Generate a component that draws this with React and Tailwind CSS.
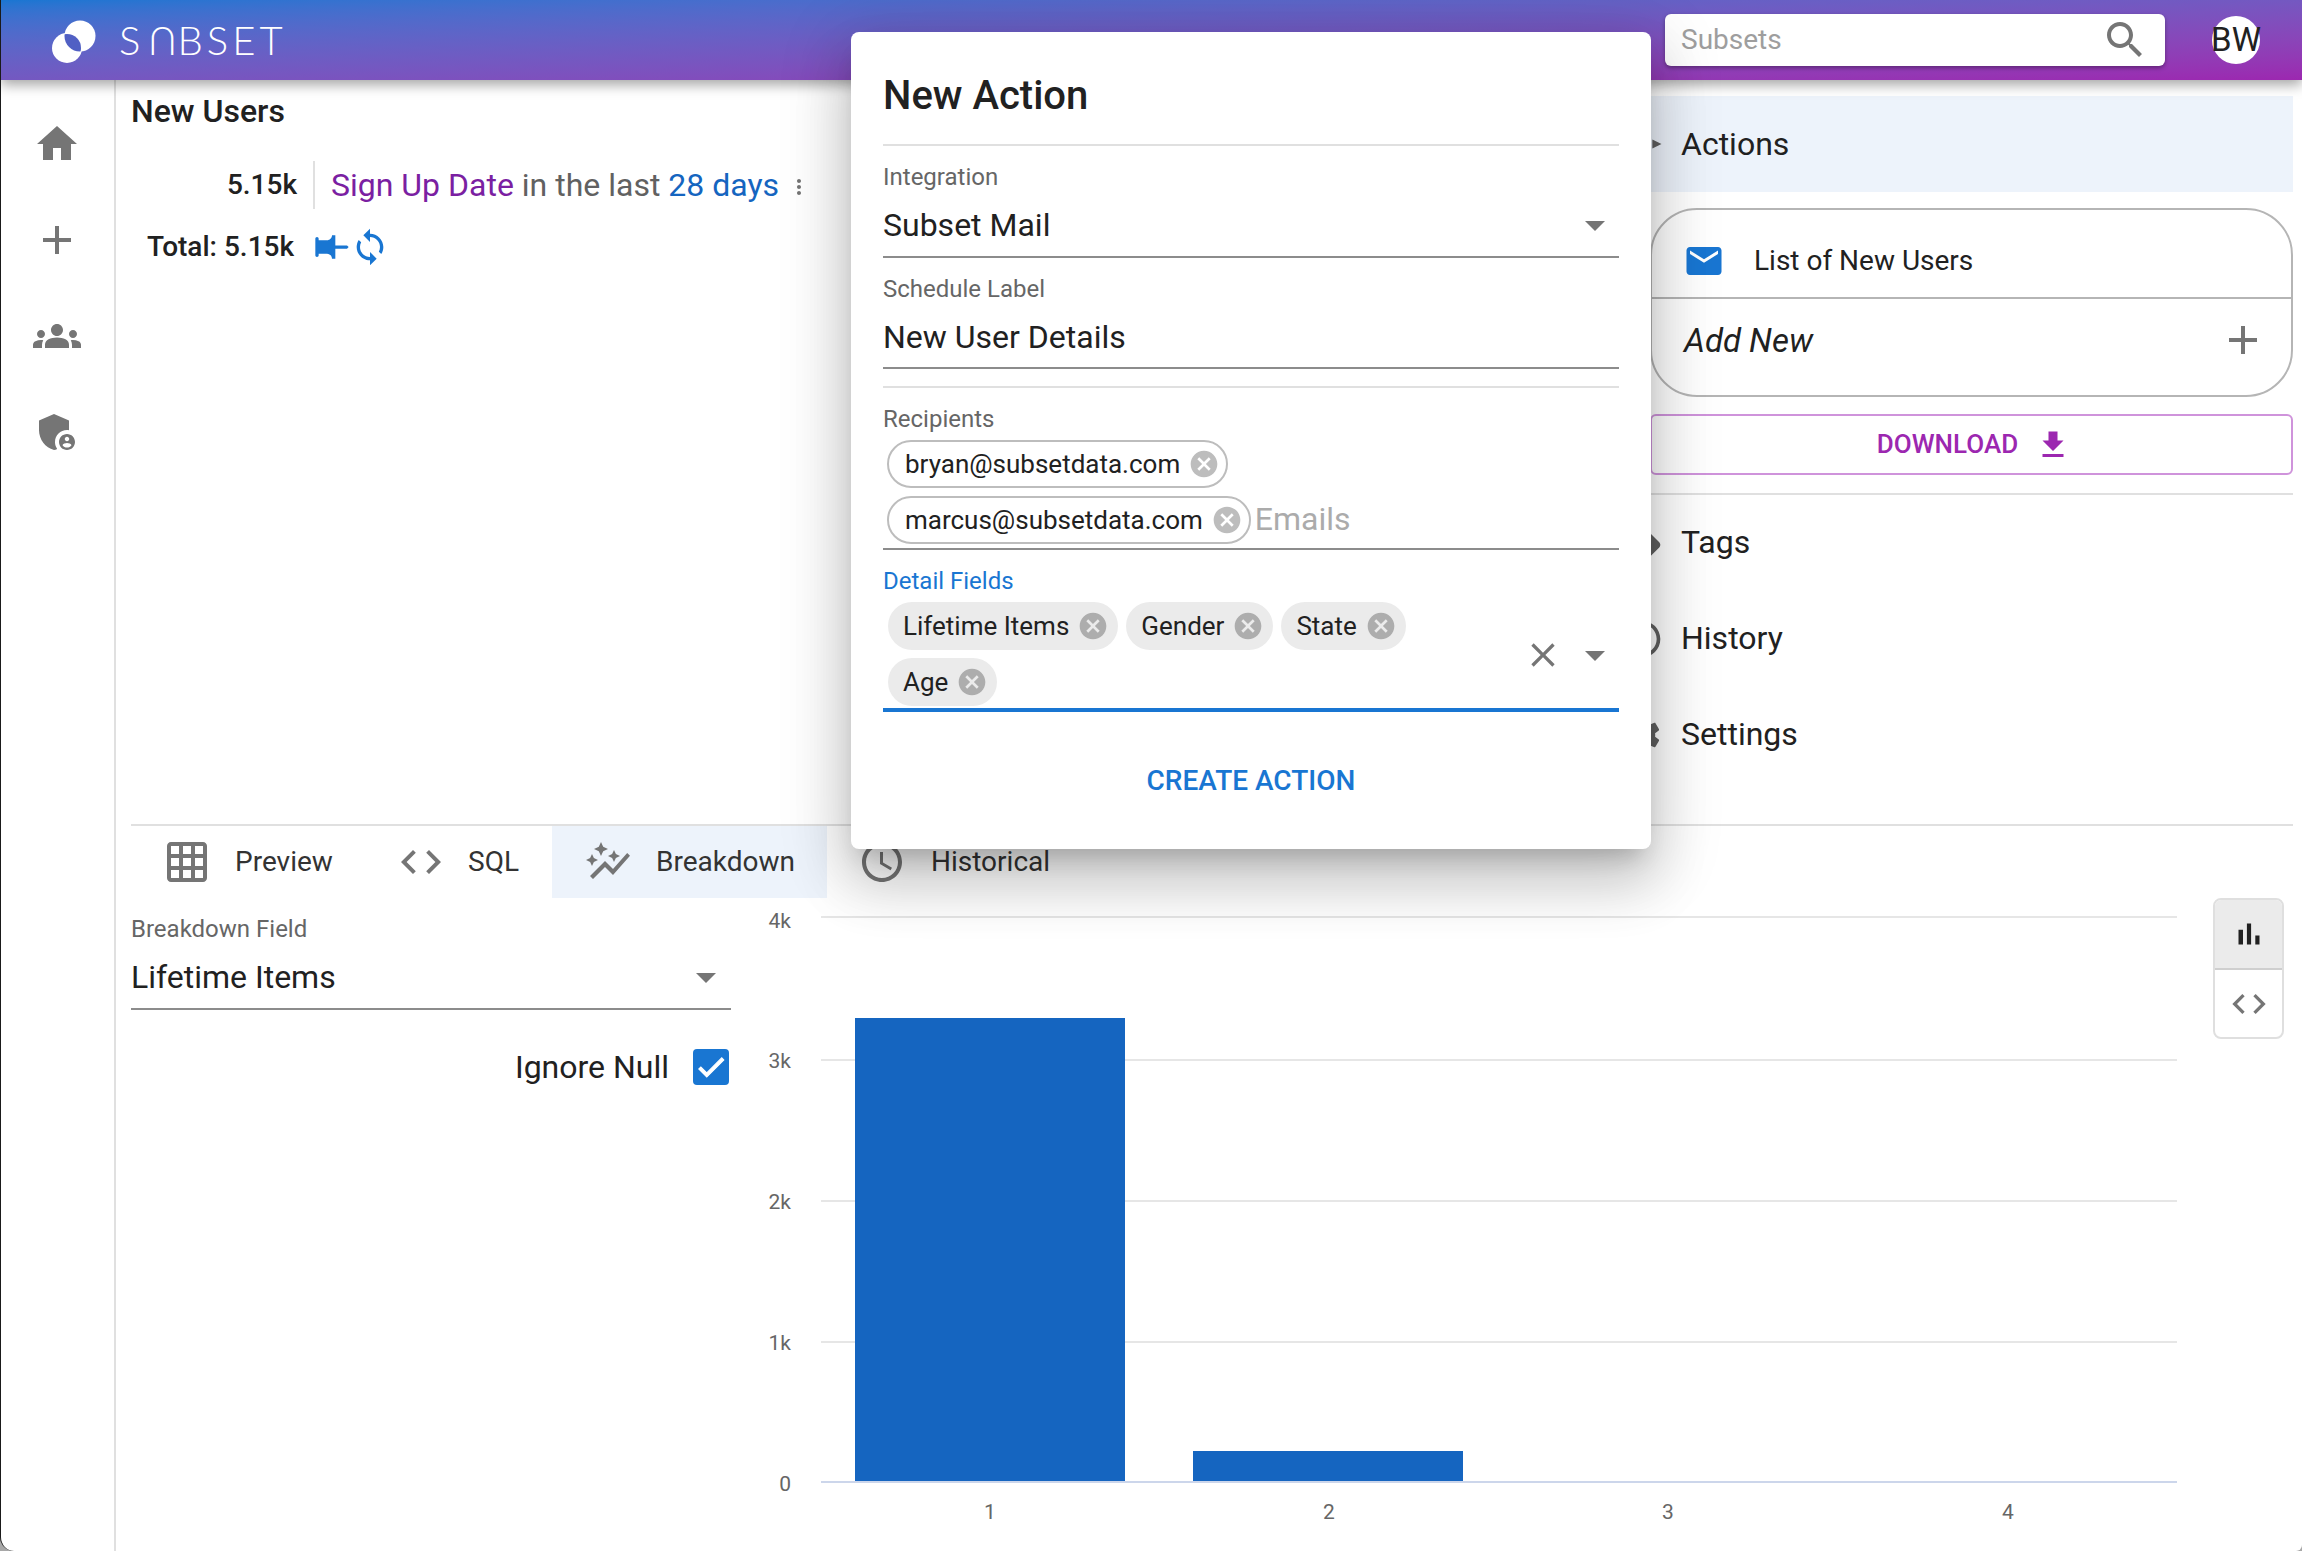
import React from "react";

const P = {
  home: "M10 20v-6h4v6h5v-8h3L12 3 2 12h3v8z",
  add: "M19 13h-6v6h-2v-6H5v-2h6V5h2v6h6v2z",
  groups: "M12 12.75c1.63 0 3.07.39 4.24.9 1.08.48 1.76 1.56 1.76 2.73V18H6v-1.61c0-1.18.68-2.26 1.76-2.73 1.17-.52 2.61-.91 4.24-.91zM4 13c1.1 0 2-.9 2-2s-.9-2-2-2-2 .9-2 2 .9 2 2 2zm1.13 1.1c-.37-.06-.74-.1-1.13-.1-.99 0-1.93.21-2.78.58C.48 14.9 0 15.62 0 16.43V18h4.5v-1.61c0-.83.23-1.61.63-2.29zM20 13c1.1 0 2-.9 2-2s-.9-2-2-2-2 .9-2 2 .9 2 2 2zm4 3.43c0-.81-.48-1.53-1.22-1.85-.85-.37-1.79-.58-2.78-.58-.39 0-.76.04-1.13.1.4.68.63 1.46.63 2.29V18H24v-1.57zM12 6c1.66 0 3 1.34 3 3s-1.34 3-3 3-3-1.34-3-3 1.34-3 3-3z",
  admin: "M17 11c.34 0 .67.04 1 .09V6.27L10.5 3 3 6.27v4.91c0 4.54 3.2 8.79 7.5 9.82.55-.13 1.08-.32 1.6-.55-.69-.98-1.1-2.17-1.1-3.45 0-3.31 2.69-6 6-6zM17 13c-2.21 0-4 1.79-4 4s1.79 4 4 4 4-1.79 4-4-1.79-4-4-4zm0 1.38c.62 0 1.12.51 1.12 1.12s-.51 1.12-1.12 1.12-1.12-.51-1.12-1.12.5-1.12 1.12-1.12zm0 5.37c-.93 0-1.74-.46-2.24-1.17.05-.72 1.51-1.08 2.24-1.08s2.19.36 2.24 1.08c-.5.71-1.31 1.17-2.24 1.17z",
  pin: "M16 9V4h1c.55 0 1-.45 1-1s-.45-1-1-1H7c-.55 0-1 .45-1 1s.45 1 1 1h1v5c0 1.66-1.34 3-3 3v2h5.97v7l1 1 1-1v-7H19v-2c-1.66 0-3-1.34-3-3z",
  sync: "M12 4V1L8 5l4 4V6c3.31 0 6 2.69 6 6 0 1.01-.25 1.97-.7 2.8l1.46 1.46C19.54 15.03 20 13.57 20 12c0-4.42-3.58-8-8-8zm0 14c-3.31 0-6-2.69-6-6 0-1.01.25-1.97.7-2.8L5.24 7.74C4.46 8.97 4 10.43 4 12c0 4.42 3.58 8 8 8v3l4-4-4-4v3z",
  more: "M12 8c1.1 0 2-.9 2-2s-.9-2-2-2-2 .9-2 2 .9 2 2 2zm0 2c-1.1 0-2 .9-2 2s.9 2 2 2 2-.9 2-2-.9-2-2-2zm0 6c-1.1 0-2 .9-2 2s.9 2 2 2 2-.9 2-2-.9-2-2-2z",
  search: "M15.5 14h-.79l-.28-.27C15.41 12.59 16 11.11 16 9.5 16 5.91 13.09 3 9.5 3S3 5.91 3 9.5 5.91 16 9.5 16c1.61 0 3.09-.59 4.23-1.57l.27.28v.79l5 4.99L20.49 19l-4.99-5zm-6 0C7.01 14 5 11.99 5 9.5S7.01 5 9.5 5 14 7.01 14 9.5 11.99 14 9.5 14z",
  drop: "M7 10l5 5 5-5z",
  right: "M10 17l5-5-5-5v10z",
  cancel: "M12 2C6.47 2 2 6.47 2 12s4.47 10 10 10 10-4.47 10-10S17.53 2 12 2zm5 13.59L15.59 17 12 13.41 8.41 17 7 15.59 10.59 12 7 8.41 8.41 7 12 10.59 15.59 7 17 8.41 13.41 12 17 15.59z",
  close: "M19 6.41L17.59 5 12 10.59 6.41 5 5 6.41 10.59 12 5 17.59 6.41 19 12 13.41 17.59 19 19 17.59 13.41 12z",
  mail: "M20 4H4c-1.1 0-2 .9-2 2v12c0 1.1.9 2 2 2h16c1.1 0 2-.9 2-2V6c0-1.1-.9-2-2-2zm0 4l-8 5-8-5V6l8 5 8-5v2z",
  download: "M19 9h-4V3H9v6H5l7 7 7-7zM5 18v2h14v-2H5z",
  grid: "M20 2H4c-1.1 0-2 .9-2 2v16c0 1.1.9 2 2 2h16c1.1 0 2-.9 2-2V4c0-1.1-.9-2-2-2zM8 20H4v-4h4v4zm0-6H4v-4h4v4zm0-6H4V4h4v4zm6 12h-4v-4h4v4zm0-6h-4v-4h4v4zm0-6h-4V4h4v4zm6 12h-4v-4h4v4zm0-6h-4v-4h4v4zm0-6h-4V4h4v4z",
  code: "M9.4 16.6L4.8 12l4.6-4.6L8 6l-6 6 6 6 1.4-1.4zm5.2 0l4.6-4.6-4.6-4.6L16 6l6 6-6 6-1.4-1.4z",
  graph: "M14.06 9.94 12 9l2.06-.94L15 6l.94 2.06L18 9l-2.06.94L15 12l-.94-2.06zM4 14l.94-2.06L7 11l-2.06-.94L4 8l-.94 2.06L1 11l2.06.94L4 14zm4.5-5 1.09-2.41L12 5.5 9.59 4.41 8.5 2 7.41 4.41 5 5.5l2.41 1.09L8.5 9zm-4 11.5 6-6.01 4 4L23 8.93l-1.41-1.41-7.09 7.97-4-4L3 19l1.5 1.5z",
  clock: "M11.99 2C6.47 2 2 6.48 2 12s4.47 10 9.99 10C17.52 22 22 17.52 22 12S17.52 2 11.99 2zM12 20c-4.42 0-8-3.58-8-8s3.58-8 8-8 8 3.58 8 8-3.58 8-8 8zm.5-13H11v6l5.25 3.15.75-1.23-4.5-2.67z",
  bars: "M5 9.2h3V19H5zM10.6 5h2.8v14h-2.8zm5.6 8H19v6h-2.8z",
  tag: "M21.41 11.58l-9-9C12.05 2.22 11.55 2 11 2H4c-1.1 0-2 .9-2 2v7c0 .55.22 1.05.59 1.42l9 9c.36.36.86.58 1.41.58.55 0 1.05-.22 1.41-.59l7-7c.37-.36.59-.86.59-1.41 0-.55-.23-1.06-.59-1.42zM5.5 7C4.67 7 4 6.33 4 5.5S4.67 4 5.5 4 7 4.67 7 5.5 6.33 7 5.5 7z",
  gear: "M19.14 12.94c.04-.3.06-.61.06-.94 0-.32-.02-.64-.07-.94l2.03-1.58c.18-.14.23-.41.12-.61l-1.92-3.32c-.12-.22-.37-.29-.59-.22l-2.39.96c-.5-.38-1.03-.7-1.62-.94l-.36-2.54c-.04-.24-.24-.41-.48-.41h-3.84c-.24 0-.43.17-.47.41l-.36 2.54c-.59.24-1.13.57-1.62.94l-2.39-.96c-.22-.08-.47 0-.59.22L2.74 8.87c-.12.21-.08.47.12.61l2.03 1.58c-.05.3-.09.63-.09.94s.02.64.07.94l-2.03 1.58c-.18.14-.23.41-.12.61l1.92 3.32c.12.22.37.29.59.22l2.39-.96c.5.38 1.03.7 1.62.94l.36 2.54c.05.24.24.41.48.41h3.84c.24 0 .44-.17.47-.41l.36-2.54c.59-.24 1.13-.56 1.62-.94l2.39.96c.22.08.47 0 .59-.22l1.92-3.32c.12-.22.07-.47-.12-.61l-2.01-1.58zM12 15.6c-1.98 0-3.6-1.62-3.6-3.6s1.62-3.6 3.6-3.6 3.6 1.62 3.6 3.6-1.62 3.6-3.6 3.6z",
};

function I({ d, s = 36, c = "#757575", className = "" }) {
  return (
    <svg viewBox="0 0 24 24" width={s} height={s} fill={c} className={"shrink-0 " + className}>
      <path d={P[d]} />
    </svg>
  );
}

function Logo() {
  return (
    <svg width="48" height="48" viewBox="0 0 48 48" className="shrink-0">
      <defs>
        <clipPath id="ca"><circle cx="29" cy="20" r="15.5" /></clipPath>
      </defs>
      <circle cx="29" cy="20" r="15.5" fill="#fff" />
      <circle cx="16" cy="32" r="15" fill="#fff" />
      <g clipPath="url(#ca)"><circle cx="16" cy="32" r="14" fill="#5160c4" /></g>
    </svg>
  );
}

function OutlineChip({ text, className = "" }) {
  return (
    <div className={"h-12 flex items-center rounded-full border-2 border-[#bdbdbd] pl-[16px] pr-[6px] text-[26px] text-[#212121] " + className}>
      <span>{text}</span>
      <I d="cancel" s={32} c="#bdbdbd" className="ml-[8px]" />
    </div>
  );
}

function FillChip({ text }) {
  return (
    <div className="h-12 flex items-center rounded-full bg-[#ebebeb] pl-[15px] pr-[9px] text-[26px] text-[#212121]">
      <span>{text}</span>
      <I d="cancel" s={32} c="#adadad" className="ml-[8px]" />
    </div>
  );
}

function Tab({ icon, label, active, iconSize = 48, gap = "ml-[21px]", className = "" }) {
  return (
    <div className={"h-[72px] flex items-center text-[28px] text-[#333333] " + (active ? "bg-[#edf3fb] " : "") + className}>
      <I d={icon} s={iconSize} />
      <span className={gap}>{label}</span>
    </div>
  );
}

function RightRow({ icon, label }) {
  return (
    <div className="h-24 flex items-center -ml-[30px] text-[32px] text-[#212121]">
      <I d={icon} s={44} c="#616161" />
      <span className="ml-[17px] -mt-[2px]">{label}</span>
    </div>
  );
}

function Chart() {
  const ys = [[917, "4k", 928], [1060, "3k", 1068], [1201, "2k", 1209], [1342, "1k", 1350], [1482, "0", 1491]];
  const xs = [[990, "1"], [1329, "2"], [1668, "3"], [2008, "4"]];
  return (
    <svg width="1450" height="640" viewBox="740 898 1450 640" className="ml-[9px] shrink-0">
      {ys.map(([y, t, ty]) => (
        <g key={t}>
          <line x1="821" x2="2177" y1={y} y2={y} stroke={t === "0" ? "#ccd6eb" : "#e6e6e6"} strokeWidth="2" />
          <text x="791" y={ty} textAnchor="end" fontSize="21" fill="#666666" fontFamily="Roboto, sans-serif">{t}</text>
        </g>
      ))}
      <rect x="855" y="1018" width="270" height="463" fill="#1565c0" />
      <rect x="1193" y="1451" width="270" height="30" fill="#1565c0" />
      {xs.map(([x, t]) => (
        <text key={t} x={x} y="1519" textAnchor="middle" fontSize="21" fill="#666666" fontFamily="Roboto, sans-serif">{t}</text>
      ))}
    </svg>
  );
}

export default function App() {
  return (
    <div className="w-[2302px] h-[1551px] bg-[#a8a8a8] overflow-hidden [font-family:Roboto,sans-serif]">
      <div className="relative w-full h-full bg-white border-l border-[#1a1a1a] rounded-bl-[14px] rounded-br-[6px] overflow-hidden flex flex-col">
        <header className="relative z-10 h-20 shrink-0 flex items-center bg-linear-to-br from-[#1976d2] to-[#9c27b0] shadow-[0_5px_12px_rgba(0,0,0,0.35)]">
          <div className="ml-[50px]"><Logo /></div>
          <div className="ml-[20px] text-white text-[40px] leading-none font-light tracking-[4px] [font-family:Lato,sans-serif] whitespace-nowrap">S<span className="inline-block rotate-180 translate-y-[2px]">U</span>BSET</div>
          <div className="ml-auto w-[500px] h-[52px] bg-white rounded-[6px] shadow-[0_2px_4px_rgba(0,0,0,0.35)] flex items-center pl-[16px] pr-[16px]">
            <span className="text-[28px] text-[#9e9e9e]">Subsets</span>
            <I d="search" s={48} c="#757575" className="ml-auto" />
          </div>
          <div className="ml-[47px] mr-[42px] w-12 h-12 rounded-full bg-white flex items-center justify-center text-[33px] text-[#212121] whitespace-nowrap">BW</div>
        </header>

        <div className="flex-1 flex min-h-0">
          <aside className="w-[115px] shrink-0 border-r-2 border-[#e0e0e0] flex flex-col items-center pt-[40px] pr-[1px]">
            <I d="home" s={48} />
            <I d="add" s={48} className="mt-[48px]" />
            <I d="groups" s={48} className="mt-[48px]" />
            <I d="admin" s={48} className="mt-[48px]" />
          </aside>

          <main className="flex-1 min-w-0 pl-[15px] pr-[9px] flex flex-col">
            <div className="h-[746px] shrink-0 flex border-b-2 border-[#e0e0e0]">
              <section className="flex-1 min-w-0">
                <div className="mt-[11px] h-10 text-[32px] leading-10 font-medium text-[#212121]">New Users</div>
                <div className="mt-[30px] flex items-center h-12">
                  <div className="w-[166px] text-right text-[28px] font-medium text-[#212121]">5.15k</div>
                  <div className="ml-[16px] w-[2px] h-12 bg-[#e0e0e0]"></div>
                  <div className="ml-[16px] text-[32px] whitespace-nowrap">
                    <span className="text-[#7b1fa2]">Sign Up Date</span>
                    <span className="text-[#616161]"> in the last </span>
                    <span className="text-[#1565c0]">28 days</span>
                  </div>
                  <I d="more" s={24} className="ml-[8px] mt-[3px]" />
                </div>
                <div className="mt-[18px] flex items-center h-10">
                  <div className="ml-[16px] text-[28px] font-medium text-[#212121]">Total: 5.15k</div>
                  <I d="pin" s={40} c="#1976d2" className="ml-[18px] -rotate-90" />
                  <I d="sync" s={40} c="#1976d2" className="-ml-[2px]" />
                </div>
              </section>

              <section className="w-[643px] shrink-0 pt-[16px]">
                <div className="h-24 bg-[#edf3fb] flex items-center -ml-[16px] text-[32px] text-[#212121]">
                  <I d="right" s={44} c="#616161" className="scale-y-50" />
                  <span className="ml-[3px]">Actions</span>
                </div>
                <div className="mt-[16px] h-[189px] rounded-[47px] border-2 border-[#b5b5b5] flex flex-col">
                  <div className="h-[89px] flex items-center border-b-2 border-[#b5b5b5] pl-[31px] pt-[15px] text-[28px] text-[#212121]">
                    <I d="mail" s={42} c="#1976d2" />
                    <span className="ml-[29px]">List of New Users</span>
                  </div>
                  <div className="h-[80px] flex items-center pl-[32px] pr-[24px] text-[33px] italic text-[#212121]">
                    <span className="mt-[3px]">Add New</span>
                    <I d="add" s={48} className="ml-auto mt-[1px]" />
                  </div>
                </div>
                <div className="mt-[17px] h-[61px] rounded-[6px] border-2 border-[#cf93db] flex items-center justify-center pl-[5px] text-[26px] font-medium text-[#9c27b0]">
                  <span>DOWNLOAD</span>
                  <I d="download" s={36} c="#9c27b0" className="ml-[17px]" />
                </div>
                <div className="mt-[18px] h-[2px] bg-[#e0e0e0]"></div>
                <RightRow icon="tag" label="Tags" />
                <RightRow icon="clock" label="History" />
                <RightRow icon="gear" label="Settings" />
              </section>
            </div>

            <div className="h-[72px] shrink-0 flex">
              <Tab icon="grid" label="Preview" iconSize={48} gap="ml-[24px]" className="pl-[32px] w-[240px]" />
              <Tab icon="code" label="SQL" iconSize={48} gap="ml-[23px]" className="pl-[26px] w-[181px]" />
              <Tab icon="graph" label="Breakdown" iconSize={48} gap="ml-[24px]" active className="pl-[32px] w-[275px]" />
              <Tab icon="clock" label="Historical" iconSize={48} gap="ml-[25px]" className="pl-[31px]" />
            </div>

            <div className="flex-1 flex min-h-0">
              <div className="w-[600px] shrink-0">
                <div className="mt-[16px] h-[30px] leading-[30px] text-[24px] text-[#666666]">Breakdown Field</div>
                <div className="mt-[14px] flex items-center h-[52px] border-b-2 border-[#8c8c8c]">
                  <span className="text-[32px] text-[#212121] -mt-[12px]">Lifetime Items</span>
                  <I d="drop" s={48} className="ml-auto mr-[1px] -mt-[12px]" />
                </div>
                <div className="mt-[39px] h-9 flex items-center justify-end pr-[2px]">
                  <span className="text-[32px] text-[#212121]">Ignore Null</span>
                  <div className="ml-[24px] w-9 h-9 rounded-[4px] bg-[#1976d2] flex items-center justify-center">
                    <svg width="34" height="34" viewBox="0 0 24 24" fill="#fff" stroke="#fff" strokeWidth="0.8"><path d="M9 16.17 4.83 12l-1.42 1.41L9 19 21 7l-1.41-1.41z" /></svg>
                  </div>
                </div>
              </div>
              <Chart />
              <div className="ml-[23px] w-[71px] h-[141px] shrink-0 flex flex-col rounded-[8px] border-2 border-[#dfdfdf] overflow-hidden">
                <div className="h-[70px] bg-[#ebebeb] border-b-2 border-[#cfcfcf] flex items-center justify-center">
                  <I d="bars" s={36} c="#212121" />
                </div>
                <div className="flex-1 flex items-center justify-center">
                  <I d="code" s={40} />
                </div>
              </div>
            </div>
          </main>
        </div>

        <div className="absolute z-20 left-[850px] top-[32px] w-[800px] h-[817px] bg-white rounded-[8px] px-[32px] shadow-[0_16px_22px_-10px_rgba(0,0,0,0.2),0_35px_55px_4px_rgba(0,0,0,0.14),0_13px_67px_12px_rgba(0,0,0,0.12)]">
          <div className="mt-[40px] h-12 leading-[48px] text-[40px] font-medium text-[#212121]">New Action</div>
          <div className="mt-[24px] h-[2px] bg-[#e0e0e0]"></div>
          <div className="mt-[16px] h-[30px] leading-[30px] text-[24px] text-[#666666]">Integration</div>
          <div className="mt-[13px] h-[53px] pb-[11px] border-b-2 border-[#8c8c8c] flex items-center text-[32px] text-[#212121]">
            <span>Subset Mail</span>
            <I d="drop" s={48} className="ml-auto" />
          </div>
          <div className="mt-[16px] h-[30px] leading-[30px] text-[24px] text-[#666666]">Schedule Label</div>
          <div className="mt-[13px] h-[52px] pb-[10px] border-b-2 border-[#8c8c8c] flex items-center text-[32px] text-[#212121]">New User Details</div>
          <div className="mt-[17px] h-[2px] bg-[#e0e0e0]"></div>
          <div className="mt-[16px] h-[30px] leading-[30px] text-[24px] text-[#666666]">Recipients</div>
          <div className="mt-[6px] pl-[4px]">
            <OutlineChip text="bryan@subsetdata.com" className="w-fit" />
          </div>
          <div className="mt-[8px] h-[54px] pl-[4px] pb-[4px] border-b-2 border-[#8c8c8c] flex items-center">
            <OutlineChip text="marcus@subsetdata.com" />
            <span className="ml-[4px] -mt-[2px] text-[32px] text-[#ababab]">Emails</span>
          </div>
          <div className="mt-[16px] h-[30px] leading-[30px] text-[24px] text-[#1976d2]">Detail Fields</div>
          <div className="mt-[6px] flex border-b-4 border-[#1976d2] h-[110px] pl-[5px]">
            <div className="w-[560px] flex flex-wrap gap-x-[8px] gap-y-[8px] content-start">
              <FillChip text="Lifetime Items" />
              <FillChip text="Gender" />
              <FillChip text="State" />
              <FillChip text="Age" />
            </div>
            <div className="flex-1 flex items-center pl-[75px]">
              <I d="close" s={40} />
              <I d="drop" s={48} className="ml-[8px]" />
            </div>
          </div>
          <div className="mt-[49px] h-10 leading-10 text-center text-[28px] font-medium text-[#1976d2]">CREATE ACTION</div>
        </div>
      </div>
    </div>
  );
}
